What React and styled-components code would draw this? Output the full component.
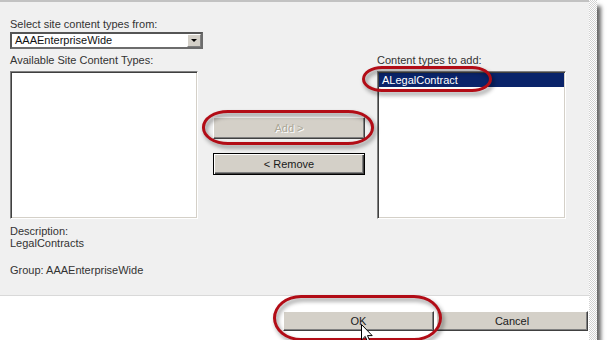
import styled, { createGlobalStyle } from "styled-components";

const GlobalStyle = createGlobalStyle`
  html, body {
    margin: 0;
    padding: 0;
    background: #ffffff;
  }
  body {
    font-family: "Liberation Sans", Arial, sans-serif;
    font-size: 11px;
    color: #333333;
  }
`;

const Frame = styled.div`
  position: relative;
  display: flex;
  width: 597px;
  height: 340px;
  box-shadow: 5px 5px 4px -1px rgba(0, 0, 0, 0.6);
`;

const Dialog = styled.div`
  display: flex;
  flex-direction: column;
  width: 589px;
`;

const GlassStrip = styled.div`
  width: 8px;
  background: repeating-conic-gradient(#d2d2d2 0 25%, #ffffff 0 50%) 0 0 / 2px 2px;
`;

const MainPanel = styled.div`
  box-sizing: border-box;
  height: 295px;
  padding: 16px 0 0 10px;
  border-top: 2px solid #c2c2c2;
  background: #f0f0f0;
`;

const FieldLabel = styled.div`
  line-height: 13px;
  white-space: nowrap;
`;

const Dropdown = styled.div`
  box-sizing: border-box;
  display: flex;
  align-items: center;
  justify-content: space-between;
  width: 193px;
  height: 17px;
  margin-top: 1px;
  padding: 0 0 0 3px;
  border: 2px solid #6c6c6c;
  border-top-color: #555555;
  border-left-color: #555555;
  background: #ffffff;
  color: #111111;
  line-height: 13px;
`;

const DropButton = styled.div`
  box-sizing: border-box;
  display: flex;
  align-items: center;
  justify-content: center;
  width: 14px;
  height: 13px;
  border: 1px solid;
  border-color: #ffffff #808080 #808080 #ffffff;
  background: #d4d0c8;

  &::after {
    content: "";
    border-left: 3px solid transparent;
    border-right: 3px solid transparent;
    border-top: 3px solid #000000;
  }
`;

const Columns = styled.div`
  display: flex;
  margin-top: 5px;
`;

const Column = styled.div`
  display: flex;
  flex-direction: column;
  width: ${(p) => p.$width}px;
  margin-left: ${(p) => p.$gap || 0}px;
`;

const ButtonColumn = styled.div`
  display: flex;
  flex-direction: column;
  gap: 14px;
  width: 150px;
  margin-left: 15px;
  padding-top: 63px;
`;

const ListBox = styled.div`
  box-sizing: border-box;
  height: 148px;
  margin-top: 4px;
  padding: 1px;
  border: 1px solid;
  border-color: #808080 #ffffff #ffffff #808080;
  box-shadow: inset 1px 1px #404040, inset -1px -1px #d4d0c8;
  background: #ffffff;
`;

const ListItem = styled.div`
  height: 14px;
  padding-left: 3px;
  line-height: 14px;
  color: ${(p) => (p.$selected ? "#ffffff" : "#111111")};
  background: ${(p) => (p.$selected ? "#0a246a" : "transparent")};
`;

const ClassicButton = styled.button`
  box-sizing: border-box;
  width: ${(p) => p.$width || 152}px;
  height: ${(p) => p.$height || 22}px;
  padding: 0;
  border: 1px solid;
  border-color: #ffffff #404040 #404040 #ffffff;
  box-shadow: inset -1px -1px #808080;
  background: #d4d0c8;
  font-family: "Liberation Sans", Arial, sans-serif;
  font-size: 11px;
  color: #1a1a1a;

  &:disabled {
    color: #aca899;
    text-shadow: 1px 1px #ffffff;
  }

  &.default {
    border: 1px solid #000000;
    box-shadow: inset 1px 1px #ffffff, inset -1px -1px #404040,
      inset -2px -2px #808080;
  }
`;

const Details = styled.div`
  margin-top: 6px;
  line-height: 12px;
`;

const GroupLine = styled.div`
  margin-top: 15px;
`;

const Footer = styled.div`
  box-sizing: border-box;
  display: flex;
  justify-content: flex-end;
  align-items: flex-start;
  gap: 2px;
  height: 45px;
  padding: 15px 1px 0 0;
  border-top: 1px solid #d9d9d9;
  background: #ffffff;
`;

const Highlight = styled.div`
  position: absolute;
  left: ${(p) => p.$x}px;
  top: ${(p) => p.$y}px;
  width: ${(p) => p.$w}px;
  height: ${(p) => p.$h}px;
  box-sizing: border-box;
  border: 3.5px solid #b20c16;
  border-radius: ${(p) => p.$radius};
  filter: drop-shadow(2px 3px 2px rgba(0, 0, 0, 0.45));
  pointer-events: none;
`;

const Cursor = styled.svg`
  position: absolute;
  left: 361px;
  top: 324px;
  width: 12px;
  height: 19px;
  overflow: visible;
`;

function PointerIcon() {
  return (
    <Cursor viewBox="0 0 12 19">
      <path
        d="M0.5 0.5 L0.5 16 L4.2 12.4 L6.8 18.2 L9 17.2 L6.5 11.6 L11.2 11.6 Z"
        fill="#ffffff"
        stroke="#000000"
        strokeWidth="1"
        strokeLinejoin="miter"
      />
    </Cursor>
  );
}

export default function App() {
  return (
    <>
      <GlobalStyle />
      <Frame>
        <Dialog>
          <MainPanel>
            <FieldLabel>Select site content types from:</FieldLabel>
            <Dropdown>
              AAAEnterpriseWide
              <DropButton />
            </Dropdown>

            <Columns>
              <Column $width={188}>
                <FieldLabel>Available Site Content Types:</FieldLabel>
                <ListBox />
              </Column>

              <ButtonColumn>
                <ClassicButton disabled>Add &gt;</ClassicButton>
                <ClassicButton className="default">&lt; Remove</ClassicButton>
              </ButtonColumn>

              <Column $width={189} $gap={14}>
                <FieldLabel>Content types to add:</FieldLabel>
                <ListBox>
                  <ListItem $selected>ALegalContract</ListItem>
                </ListBox>
              </Column>
            </Columns>

            <Details>
              <div>Description:</div>
              <div>LegalContracts</div>
              <GroupLine>Group: AAAEnterpriseWide</GroupLine>
            </Details>
          </MainPanel>

          <Footer>
            <ClassicButton $width={151} $height={20}>
              OK
            </ClassicButton>
            <ClassicButton $width={152} $height={20}>
              Cancel
            </ClassicButton>
          </Footer>
        </Dialog>
        <GlassStrip />

        <Highlight $x={362} $y={66} $w={130} $h={26} $radius="20px / 13px" />
        <Highlight $x={202} $y={110} $w={172} $h={35} $radius="26px / 17px" />
        <Highlight $x={273} $y={295} $w={169} $h={46} $radius="28px / 23px" />
        <PointerIcon />
      </Frame>
    </>
  );
}
